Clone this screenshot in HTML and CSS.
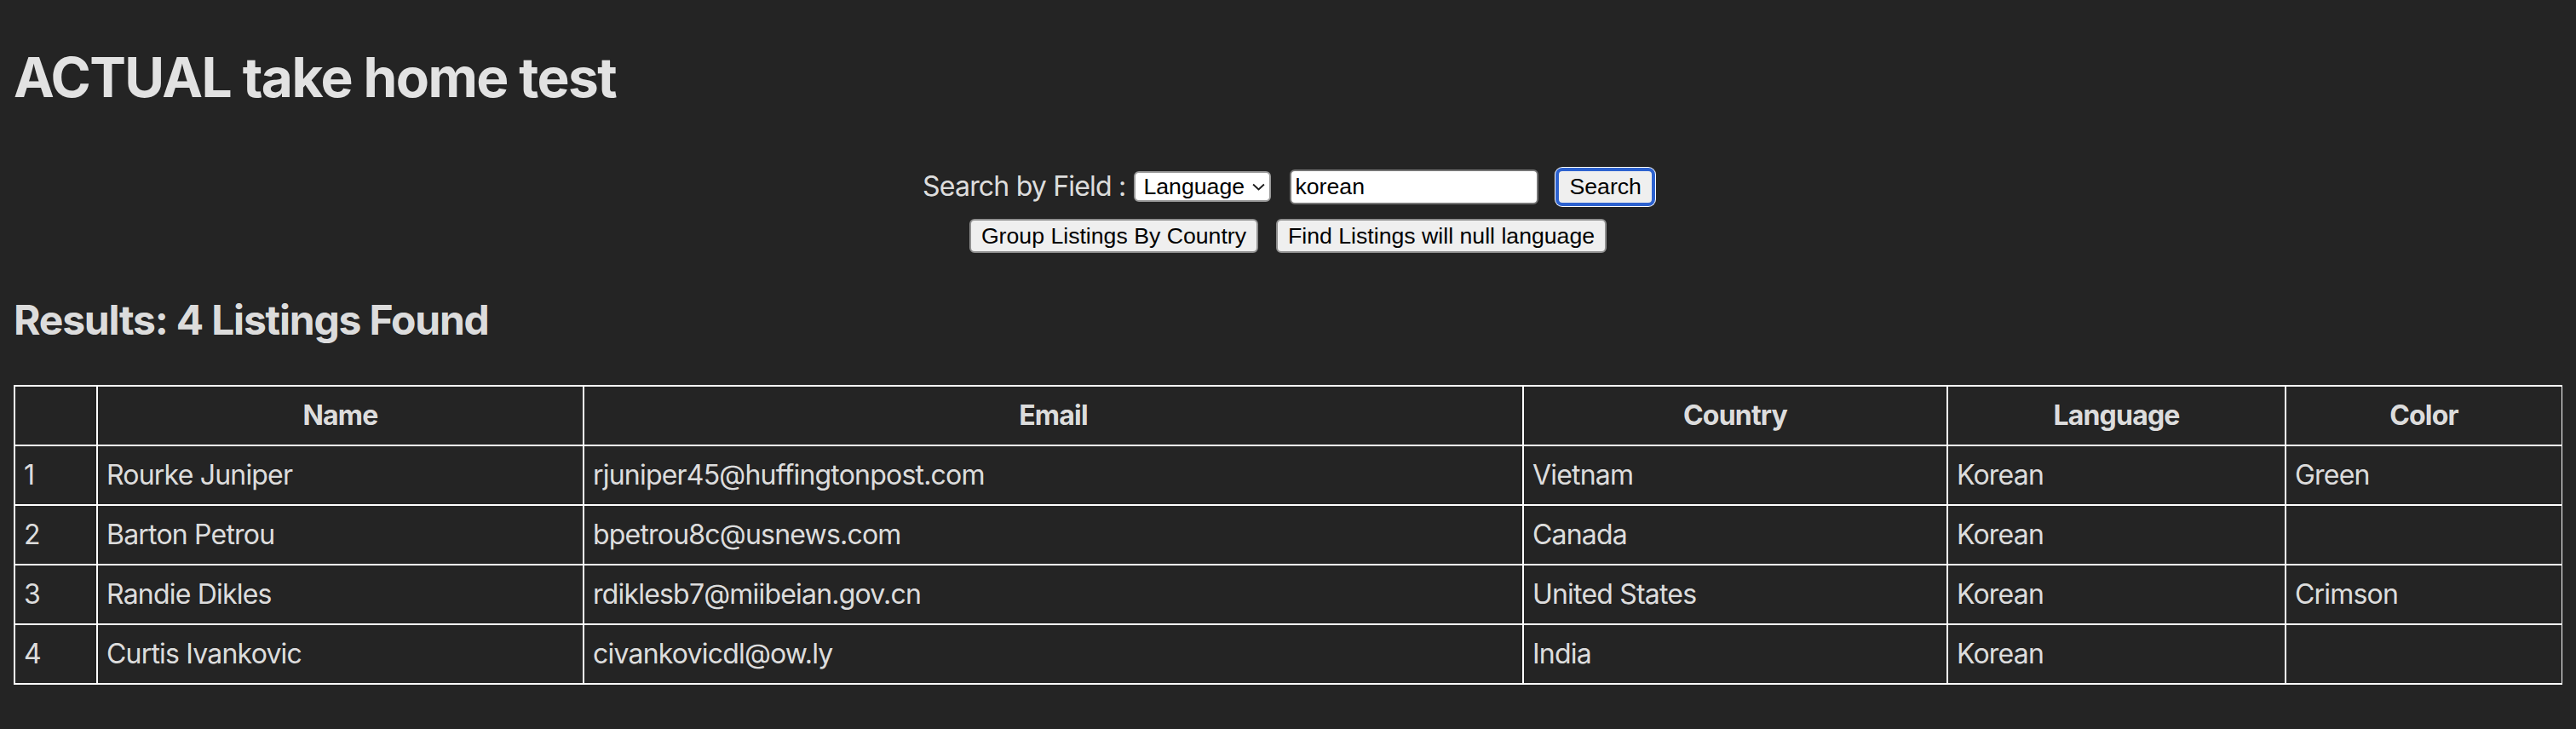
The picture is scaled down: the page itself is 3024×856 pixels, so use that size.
FILE: index.html
```html
<!DOCTYPE html>
<html lang="en">
<head>
<meta charset="utf-8">
<title>ACTUAL take home test</title>
<link rel="stylesheet" href="styles.css">
</head>
<body>
<h1 class="title">ACTUAL take home test</h1>
<div class="controls">
  <div class="search-row">
    <label class="search-label" for="field">Search by Field :</label>
    <span class="select-wrap">
      <select id="field" class="field-select"><option>Language</option></select>
      <svg class="chevron" viewBox="0 0 14 8" aria-hidden="true"><path d="M1 1.2l6 5.6 6-5.6" fill="none" stroke="#1a1a1a" stroke-width="1.7"/></svg>
    </span>
    <input class="search-input" type="text" value="korean">
    <button class="btn btn-focused" type="button">Search</button>
  </div>
  <div class="action-row">
    <button class="btn" type="button">Group Listings By Country</button>
    <button class="btn" type="button">Find Listings will null language</button>
  </div>
</div>
<h2 class="results-title">Results: 4 Listings Found</h2>
<table class="results">
  <colgroup>
    <col class="c-idx"><col class="c-name"><col class="c-email"><col class="c-country"><col class="c-lang"><col class="c-color">
  </colgroup>
  <thead>
    <tr><th></th><th>Name</th><th>Email</th><th>Country</th><th>Language</th><th>Color</th></tr>
  </thead>
  <tbody>
    <tr><td>1</td><td>Rourke Juniper</td><td>rjuniper45@huffingtonpost.com</td><td>Vietnam</td><td>Korean</td><td>Green</td></tr>
    <tr><td>2</td><td>Barton Petrou</td><td>bpetrou8c@usnews.com</td><td>Canada</td><td>Korean</td><td></td></tr>
    <tr><td>3</td><td>Randie Dikles</td><td>rdiklesb7@miibeian.gov.cn</td><td>United States</td><td>Korean</td><td>Crimson</td></tr>
    <tr><td>4</td><td>Curtis Ivankovic</td><td>civankovicdl@ow.ly</td><td>India</td><td>Korean</td><td></td></tr>
  </tbody>
</table>
</body>
</html>
```
FILE: styles.css
```css
html {
  background: #242424;
}
body {
  margin: 0 16px 16px;
  font-family: Inter, "Noto Sans", sans-serif;
  font-size: 32px;
  line-height: 1.5;
  letter-spacing: -0.8px;
  color: rgba(255, 255, 255, 0.87);
  background: #242424;
}
.title {
  font-size: 64px;
  font-weight: 700;
  margin: 43px 0;
  letter-spacing: -1.6px;
}
.controls {
  display: flex;
  flex-direction: column;
  align-items: center;
  gap: 11px;
  padding-top: 13px;
}
.search-row {
  display: flex;
  align-items: center;
  height: 48px;
}
.action-row {
  display: flex;
  align-items: center;
  gap: 21px;
  height: 46px;
}
.search-label {
  margin-right: 10px;
}
.select-wrap {
  position: relative;
  display: inline-flex;
  margin-right: 22px;
}
.field-select {
  -webkit-appearance: none;
  appearance: none;
  box-sizing: border-box;
  width: 161px;
  height: 36px;
  padding: 0 0 0 9px;
  background: #fff;
  color: #000;
  border: 2px solid #9a9a9a;
  border-radius: 6px;
  font-family: "Liberation Sans", Arial, sans-serif;
  font-size: 26.67px;
  letter-spacing: 0;
}
.chevron {
  position: absolute;
  right: 7px;
  top: 14px;
  width: 15px;
  height: 9px;
  pointer-events: none;
}
.search-input {
  box-sizing: border-box;
  width: 292px;
  height: 41px;
  margin: 0 22px 0 0;
  padding: 2px 4px;
  background: #fff;
  color: #000;
  border: 2px solid #767676;
  border-radius: 6px;
  font-family: "Liberation Sans", Arial, sans-serif;
  font-size: 26.67px;
  letter-spacing: 0;
}
.btn {
  box-sizing: border-box;
  height: 40px;
  margin: 0;
  padding: 0 12px;
  background: #efefef;
  color: #000;
  border: 2px solid #8f8f8f;
  border-radius: 6px;
  font-family: "Liberation Sans", Arial, sans-serif;
  font-size: 26.67px;
  letter-spacing: 0;
}
.btn-focused {
  height: 41px;
  border-color: #2d62cf;
  box-shadow: 0 0 0 2px #2d62cf, 0 0 0 3px #ffffff;
}
.results-title {
  font-size: 48px;
  font-weight: 700;
  margin: 40px 0;
  letter-spacing: -1.2px;
}
.results {
  width: 100%;
  border-collapse: collapse;
  table-layout: fixed;
}
.results th,
.results td {
  border: 2px solid #ffffff;
  padding: 10px;
  text-align: left;
  font-weight: 400;
  white-space: nowrap;
}
.results th {
  text-align: center;
  font-weight: 700;
}
.c-idx { width: 97px; }
.c-name { width: 571px; }
.c-email { width: 1103px; }
.c-country { width: 498px; }
.c-lang { width: 397px; }
.c-color { width: 325px; }
```
